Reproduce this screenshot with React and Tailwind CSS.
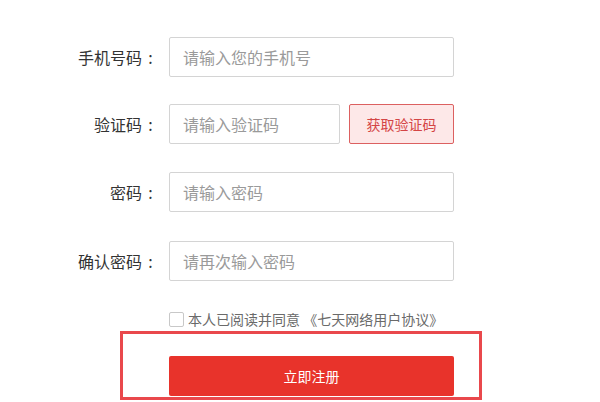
import React from "react";

const fields = [
  { label: "手机号码", placeholder: "请输入您的手机号", mt: "mt-[37px]" },
  { label: "验证码", placeholder: "请输入验证码", mt: "mt-[27px]", code: true },
  { label: "密码", placeholder: "请输入密码", mt: "mt-[28px]", type: "password" },
  { label: "确认密码", placeholder: "请再次输入密码", mt: "mt-[29px]", type: "password" },
];

const Field = ({ label, placeholder, mt, code, type }) => {
  return (
    <div className={`${mt} flex items-center`}>
      <label className="flex w-[159px] justify-end text-[16px] text-[#333]">
        <span>{label}</span>
        <span className="inline-block w-[17px] text-center">:</span>
      </label>
      <div className="ml-[10px] flex w-[285px] items-center">
        <input
          type={type || "text"}
          placeholder={placeholder}
          className={`${code ? "w-[171px]" : "w-[285px]"} h-[40px] rounded-[2px] border border-[#d4d4d4] bg-white pl-[13px] text-[16px] text-[#333] outline-none placeholder:text-[#9a9a9a]`}
        />
        {code && (
          <button className="ml-auto h-[40px] w-[105px] rounded-[2px] border border-[#dc6060] bg-[#fde8e8] text-[14px] text-[#d44545]">
            获取验证码
          </button>
        )}
      </div>
    </div>
  );
};

const App = () => {
  return (
    <div
      className="h-[402px] w-[600px] overflow-hidden bg-white pt-px"
      style={{ fontFamily: '"Noto Sans CJK SC", "Noto Sans", sans-serif' }}
    >
      <div className="-mt-px">
        {fields.map((f) => (
          <Field key={f.label} {...f} />
        ))}
      </div>

      <label className="ml-[169px] mt-[28px] flex h-[20px] items-center text-[14px] text-[#6a6a6a]">
        <span className="h-[15px] w-[15px] rounded-[2px] border border-[#c8c8c8] bg-white" />
        <span className="ml-[4px]">本人已阅读并同意 《七天网络用户协议》</span>
      </label>

      <div className="ml-[120px] mt-[2px] w-[362px] border-[3px] border-[#e9484c] pb-px pl-[46px] pt-[22px]">
        <button className="h-[40px] w-[285px] rounded-[2px] bg-[#e8332b] text-[14px] text-white">
          立即注册
        </button>
      </div>
    </div>
  );
};

export default App;
